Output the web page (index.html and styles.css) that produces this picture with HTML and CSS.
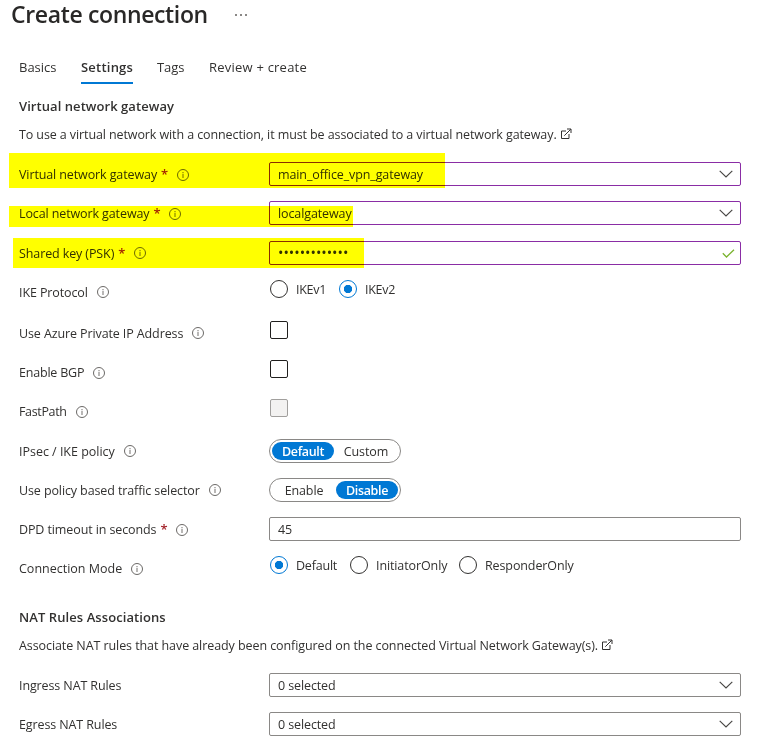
FILE: index.html
```html
<!DOCTYPE html>
<html lang="en">
<head>
<meta charset="utf-8">
<title>Create connection</title>
<link rel="stylesheet" href="styles.css">
</head>
<body>
<svg class="sprite" aria-hidden="true">
  <symbol id="info" viewBox="0 0 12 12"><circle cx="6" cy="6" r="5.500" fill="none" stroke="#6b6967"/><path d="M6 5v4M6 3v1.200" fill="none" stroke="#8a8886" stroke-width="1.200"/></symbol>
  <symbol id="chevron" viewBox="0 0 14 8"><path d="M.7.8 7 7 13.3.8" fill="none" stroke="#484644" stroke-width="1.15"/></symbol>
  <symbol id="external" viewBox="0 0 12 12"><path d="M6 3H1.5v7.500h7.500V6M4.300 7.700 10.700 1.300M7 1h4v4" fill="none" stroke="#323130"/></symbol>
  <symbol id="check" viewBox="0 0 13 9"><path d="M.8 4.300 4.500 8 12 .7" fill="none" stroke="#7ab32e" stroke-width="1.300"/></symbol>
</svg>

<header class="title">
  <h1>Create connection</h1>
  <span class="more"><i></i><i></i><i></i></span>
</header>

<nav class="tabs">
  <a class="tab basics">Basics</a>
  <a class="tab active">Settings</a>
  <a class="tab tags">Tags</a>
  <a class="tab">Review + create</a>
</nav>

<main class="form">
  <h2 class="gateway-heading">Virtual network gateway</h2>
  <p><span>To use a virtual network with a connection, it must be associated to a virtual network gateway.</span><svg class="external"><use href="#external"/></svg></p>

  <div class="row first marked mark-virtual">
    <div class="label"><span>Virtual network gateway</span><b>*</b><svg class="info low"><use href="#info"/></svg></div>
    <div class="field edited"><span>main_office_vpn_gateway</span><svg class="chevron"><use href="#chevron"/></svg></div>
  </div>
  <div class="row marked mark-local">
    <div class="label"><span>Local network gateway</span><b>*</b><svg class="info low"><use href="#info"/></svg></div>
    <div class="field edited"><span>localgateway</span><svg class="chevron"><use href="#chevron"/></svg></div>
  </div>
  <div class="row loose marked mark-key">
    <div class="label"><span>Shared key (PSK)</span><b>*</b><svg class="info"><use href="#info"/></svg></div>
    <div class="field edited"><span class="dots">•••••••••••••</span><svg class="check"><use href="#check"/></svg></div>
  </div>
  <div class="row">
    <div class="label"><span>IKE Protocol</span><svg class="info"><use href="#info"/></svg></div>
    <div class="choices">
      <span class="radio ike"><i></i><span>IKEv1</span></span>
      <span class="radio on ike"><i></i><span>IKEv2</span></span>
    </div>
  </div>
  <div class="row looser">
    <div class="label"><span>Use Azure Private IP Address</span><svg class="info"><use href="#info"/></svg></div>
    <div class="choices"><span class="box"></span></div>
  </div>
  <div class="row">
    <div class="label bgp"><span>Enable BGP</span><svg class="info low"><use href="#info"/></svg></div>
    <div class="choices"><span class="box"></span></div>
  </div>
  <div class="row">
    <div class="label fastpath"><span>FastPath</span><svg class="info low"><use href="#info"/></svg></div>
    <div class="choices"><span class="box disabled"></span></div>
  </div>
  <div class="row loose">
    <div class="label ipsec"><span>IPsec / IKE policy</span><svg class="info"><use href="#info"/></svg></div>
    <div class="toggle"><span class="on">Default</span><span>Custom</span></div>
  </div>
  <div class="row">
    <div class="label"><span>Use policy based traffic selector</span><svg class="info"><use href="#info"/></svg></div>
    <div class="toggle"><span>Enable</span><span class="on">Disable</span></div>
  </div>
  <div class="row">
    <div class="label"><span>DPD timeout in seconds</span><b>*</b><svg class="info low"><use href="#info"/></svg></div>
    <div class="field"><span>45</span></div>
  </div>
  <div class="row">
    <div class="label mode"><span>Connection Mode</span><svg class="info low"><use href="#info"/></svg></div>
    <div class="choices">
      <span class="radio on default"><i></i><span>Default</span></span>
      <span class="radio initiator"><i></i><span>InitiatorOnly</span></span>
      <span class="radio"><i></i><span>ResponderOnly</span></span>
    </div>
  </div>

  <h2 class="nat-heading">NAT Rules Associations</h2>
  <p class="nat-text"><span>Associate NAT rules that have already been configured on the connected Virtual Network Gateway(s).</span><svg class="external"><use href="#external"/></svg></p>

  <div class="row first">
    <div class="label"><span>Ingress NAT Rules</span></div>
    <div class="field"><span>0 selected</span><svg class="chevron"><use href="#chevron"/></svg></div>
  </div>
  <div class="row">
    <div class="label"><span>Egress NAT Rules</span></div>
    <div class="field"><span>0 selected</span><svg class="chevron"><use href="#chevron"/></svg></div>
  </div>
</main>
</body>
</html>
```
FILE: styles.css
```css
* { box-sizing: border-box; }

body {
  margin: 0;
  background: #fff;
  color: #323130;
  font: 12.5px/20px "Open Sans", "Noto Sans", sans-serif;
  letter-spacing: -0.11px;
  white-space: nowrap;
}

svg { display: block; flex: none; }
.sprite { position: absolute; width: 0; height: 0; }

.title { display: flex; align-items: center; height: 30px; padding-left: 11px; }
h1 { margin: 0; width: 224px; font-size: 23px; font-weight: 600; line-height: 28px; padding-bottom: 2px; letter-spacing: -0.36px; color: #292827; }
.more { display: flex; gap: 3px; }
.more i { width: 2px; height: 2px; background: #8a8886; }

.tabs { display: flex; gap: 24px; margin-top: 20px; padding-left: 19px; height: 34px; line-height: 34px; font-size: 13px; letter-spacing: 0.22px; }
.basics { width: 38px; letter-spacing: 0; }
.tags { width: 28px; letter-spacing: -0.1px; }
.active { width: 52px; font-weight: 600; border-bottom: 2px solid #0078d4; }

.form { width: 741px; padding: 12px 0 0 19px; }
h2 { margin: 0 0 8px; font-size: 13px; line-height: 20px; font-weight: 600; letter-spacing: 0.06px; }
.nat-heading { margin-top: 27px; letter-spacing: 0.08px; }
p { display: flex; align-items: center; margin: 0; height: 20px; gap: 3px; letter-spacing: -0.1px; }
.nat-text { letter-spacing: -0.08px; }
.external { width: 12px; height: 12px; }

.row { position: relative; display: grid; grid-template-columns: 250px 472px; height: 24px; margin-top: 15px; align-items: center; }
.row.loose { margin-top: 16px; }
.row.looser { margin-top: 17px; }
.row.first { margin-top: 18px; }

/* Text sits one pixel below the centre line of its control */
p span, .label span, .field span, .radio span { padding-top: 2px; }

.label { display: flex; align-items: center; }
.label b { margin-left: 4px; font-weight: 600; font-size: 13px; color: #a4262c; }
.info { width: 12px; height: 12px; margin-left: 9px; }
.info.low { margin-top: 2px; }
.bgp { letter-spacing: -0.2px; }
.fastpath { letter-spacing: -0.35px; }
.ipsec { letter-spacing: -0.02px; }
.mode { letter-spacing: 0; }

.field { display: flex; align-items: center; justify-content: space-between; height: 24px; padding: 0 8px; border: 1px solid #8a8886; border-radius: 2px; }
.edited { border-color: #8a2da5; }
.chevron { width: 14px; height: 8px; margin-right: -1px; }
.check { width: 13px; height: 9px; margin-right: -3px; }
.field .dots { font-size: 14.5px; letter-spacing: -0.04px; padding-top: 0; }

/* Highlighter strokes drawn over the rows */
.marked::after { content: ""; position: absolute; background: #ff0; mix-blend-mode: multiply; }
.mark-virtual::after { left: -10px; top: -9px; width: 436px; height: 35px; }
.mark-local::after { left: -10px; top: 5px; width: 344px; height: 21px; }
.mark-key::after { left: -6px; top: -3px; width: 351px; height: 30px; }

.choices { display: flex; align-items: center; height: 18px; margin: 0 0 6px 1px; }
.box { width: 18px; height: 18px; border: 1px solid #201f1e; border-radius: 2px; }
.disabled { border-color: #a19f9d; background: #f3f2f1; }
.radio { display: flex; align-items: center; gap: 8px; }
.radio i { width: 18px; height: 18px; border: 1px solid #323130; border-radius: 50%; }
.radio.on i { border-color: #0078d4; background: radial-gradient(circle, #0078d4 3.8px, #fff 4.5px); }
.ike { width: 69px; letter-spacing: -0.3px; }
.default { width: 80px; letter-spacing: -0.2px; }
.initiator { width: 109px; }

.toggle { display: flex; width: 132px; height: 24px; padding: 2px; border: 1px solid #8a8886; border-radius: 12px; }
.toggle span { flex: 1; height: 18px; margin-top: 0; line-height: 20px; border-radius: 9px; text-align: center; }
.toggle .on { flex: none; width: 62px; background: #0078d4; color: #fff; font-weight: 600; letter-spacing: -0.35px; }
```
